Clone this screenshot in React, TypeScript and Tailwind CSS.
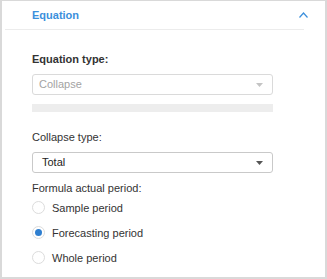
import React, { useState } from 'react';

const font = { fontFamily: '"Liberation Sans", Arial, sans-serif' };

function Caret({ color }: { color: string }) {
  return (
    <svg width="7" height="4" viewBox="0 0 7 4" className="shrink-0">
      <polygon points="0,0 7,0 3.5,4" fill={color} />
    </svg>
  );
}

function Radio({ label, checked, onClick }: { label: string; checked: boolean; onClick: () => void }) {
  return (
    <div onClick={onClick} className="h-[25px] flex items-center gap-[7px] cursor-pointer">
      <span className="w-[13px] h-[13px] rounded-full border border-[#dcdcdc] bg-white flex items-center justify-center">
        {checked && <span className="w-[7px] h-[7px] rounded-full bg-[#2f7fd0]" />}
      </span>
      <span className="text-[11px] leading-[14px] text-[#333]">{label}</span>
    </div>
  );
}

export default function App() {
  const [period, setPeriod] = useState('forecast');

  return (
    <div style={font} className="w-[327px] h-[279px] bg-white border-x-2 border-b-2 border-t border-[#d9d9d9] box-border">
      {/* Header */}
      <div className="mx-[3px] mr-[21px] h-[29px] border-b border-[#ececec] flex items-center justify-between pl-[27px]">
        <span className="text-[11px] font-bold text-[#3b8fdc] leading-[14px]">Equation</span>
        <svg width="9" height="6" viewBox="0 0 9 6" className="mr-[-4px]">
          <polyline points="0.5,5.5 4.5,1 8.5,5.5" fill="none" stroke="#3b8fdc" strokeWidth="1.2" />
        </svg>
      </div>

      <div className="pl-[30px] w-[271px]">
        <div className="mt-[22px] text-[11px] leading-[14px] font-bold text-[#333]">Equation type:</div>
        <div className="mt-[8px] h-[21px] rounded-[3px] border border-[#dadada] bg-white flex items-center justify-between pl-[6px] pr-[9px]">
          <span className="text-[11px] text-[#a3a3a3]">Collapse</span>
          <Caret color="#c4c4c4" />
        </div>
        <div className="mt-[9px] h-[8px] bg-[#ededed]" />

        <div className="mt-[18px] text-[11px] leading-[14px] text-[#333]">Collapse type:</div>
        <div className="mt-[8px] h-[21px] rounded-[3px] border border-[#c9c9c9] bg-white flex items-center justify-between pl-[9px] pr-[9px]">
          <span className="text-[11px] text-[#222]">Total</span>
          <Caret color="#555" />
        </div>

        <div className="mt-[8px] text-[11px] leading-[14px] text-[#333]">Formula actual period:</div>
        <div className="flex flex-col">
          <Radio label="Sample period" checked={period === 'sample'} onClick={() => setPeriod('sample')} />
          <Radio label="Forecasting period" checked={period === 'forecast'} onClick={() => setPeriod('forecast')} />
          <Radio label="Whole period" checked={period === 'whole'} onClick={() => setPeriod('whole')} />
        </div>
      </div>
    </div>
  );
}
